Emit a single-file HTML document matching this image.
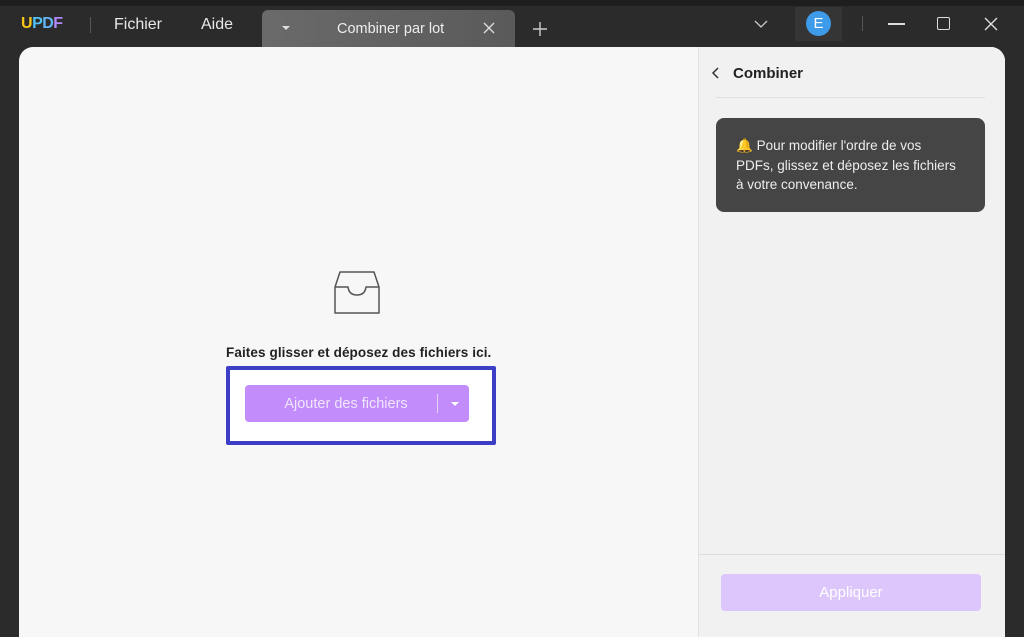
<!DOCTYPE html>
<html><head><meta charset="utf-8"><style>
*{margin:0;padding:0;box-sizing:border-box}
body{width:1024px;height:631px;background:#2b2b2b;font-family:"Liberation Sans",sans-serif;position:relative;overflow:hidden}
.a{position:absolute}
.t{color:#e8e8e8;font-size:16px}
</style></head><body>
<div class="a" style="left:0;top:0;width:1024px;height:6px;background:#1e1e1e"></div>
<div class="a" style="left:21px;top:15px;font-size:16px;font-weight:bold;letter-spacing:-0.5px"><span style="color:#f5c518">U</span><span style="color:#4fc3f7">P</span><span style="color:#64b5f6">D</span><span style="color:#b388ff">F</span></div>
<div class="a" style="left:90px;top:17px;width:1px;height:16px;background:#555"></div>
<div class="a t" style="left:114px;top:16px">Fichier</div>
<div class="a t" style="left:201px;top:16px">Aide</div>
<div class="a" style="left:262px;top:10px;width:253px;height:38px;background:linear-gradient(90deg,#6a6a6a,#5a5a5a);border-radius:6px 6px 0 0"></div>
<div class="a" style="left:282px;top:26px;width:0;height:0;border-left:4px solid transparent;border-right:4px solid transparent;border-top:4px solid #ddd"></div>
<div class="a" style="left:337px;top:21px;color:#eee;font-size:14.5px">Combiner par lot</div>
<svg class="a" style="left:483px;top:22px" width="12" height="12"><path d="M1 1L11 11M11 1L1 11" stroke="#ddd" stroke-width="1.4"/></svg>
<svg class="a" style="left:532px;top:21px" width="16" height="16"><path d="M8 1V15M1 8H15" stroke="#ccc" stroke-width="1.4"/></svg>
<svg class="a" style="left:754px;top:19px" width="14" height="10"><path d="M1 2L7 8L13 2" fill="none" stroke="#ccc" stroke-width="1.3"/></svg>
<div class="a" style="left:795px;top:7px;width:47px;height:34px;background:#353535"></div>
<div class="a" style="left:806px;top:11px;width:25px;height:25px;border-radius:50%;background:#3d9be9;color:#fff;font-size:15px;text-align:center;line-height:25px">E</div>
<div class="a" style="left:862px;top:16px;width:1px;height:15px;background:#555"></div>
<div class="a" style="left:888px;top:23px;width:17px;height:1.5px;background:#ddd"></div>
<div class="a" style="left:937px;top:17px;width:13px;height:13px;border:1.4px solid #ddd;border-radius:2px"></div>
<svg class="a" style="left:984px;top:17px" width="14" height="14"><path d="M1 1L13 13M13 1L1 13" stroke="#ddd" stroke-width="1.4"/></svg>
<div class="a" style="left:19px;top:47px;width:986px;height:590px;background:#f7f7f7;border-radius:14px 14px 0 0;overflow:hidden">
 <div class="a" style="left:679px;top:0;width:307px;height:590px;background:#f1f1f1;border-left:1px solid #e2e2e2"></div>
</div>
<svg class="a" style="left:711px;top:66px" width="10" height="14"><path d="M7 2L2 7L7 12" fill="none" stroke="#333" stroke-width="1.5"/></svg>
<div class="a" style="left:733px;top:65px;font-size:15px;font-weight:bold;color:#222">Combiner</div>
<div class="a" style="left:716px;top:97px;width:269px;height:1px;background:#e0e0e0"></div>
<div class="a" style="left:716px;top:118px;width:269px;height:94px;background:#454545;border-radius:8px;color:#eee;font-size:13.5px;line-height:19.5px;padding:18px 10px 0 20px;white-space:nowrap"><span style="color:#f5c030">🔔</span> Pour modifier l'ordre de vos<br>PDFs, glissez et déposez les fichiers<br>à votre convenance.</div>
<div class="a" style="left:698px;top:554px;width:307px;height:1px;background:#dcdcdc"></div>
<div class="a" style="left:721px;top:574px;width:260px;height:37px;background:#dcc6fb;border-radius:4px;color:#fff;font-size:15px;text-align:center;line-height:38px">Appliquer</div>
<svg class="a" style="left:333px;top:271px" width="48" height="45"><path d="M7 1H41L46 16V42H2V16Z M2 16H15Q16 24 24 24Q32 24 33 16H46" fill="none" stroke="#555" stroke-width="1.5" stroke-linejoin="round"/></svg>
<div class="a" style="left:226px;top:345px;font-size:13.5px;font-weight:bold;color:#222;letter-spacing:0.1px">Faites glisser et déposez des fichiers ici.</div>
<div class="a" style="left:226px;top:366px;width:270px;height:79px;border:4px solid #3c3fc6;border-radius:2px;background:#fff"></div>
<div class="a" style="left:245px;top:385px;width:224px;height:37px;background:#c28cfb;border-radius:4px"></div>
<div class="a" style="left:245px;top:396px;width:202px;text-align:center;color:#f0e6ff;font-size:14.5px">Ajouter des fichiers</div>
<div class="a" style="left:437px;top:394px;width:1px;height:19px;background:#e5d2ff"></div>
<div class="a" style="left:451px;top:402px;width:0;height:0;border-left:4px solid transparent;border-right:4px solid transparent;border-top:4px solid #fff"></div>
</body></html>
